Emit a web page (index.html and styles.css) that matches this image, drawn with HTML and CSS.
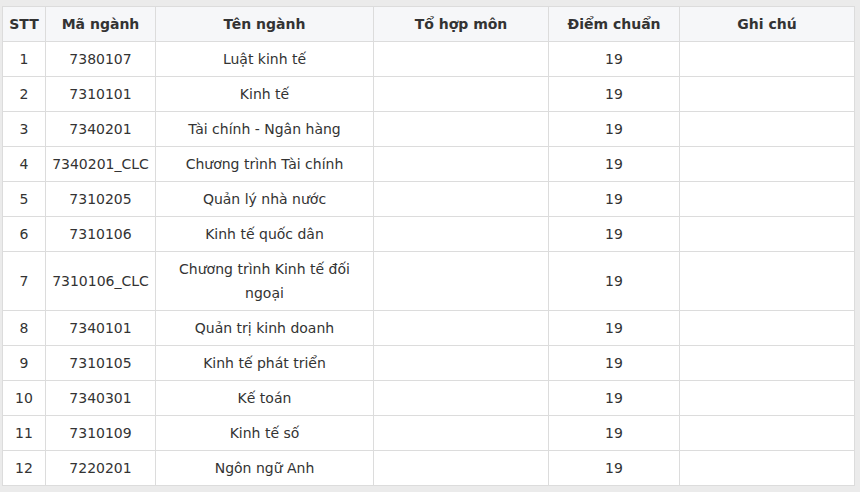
FILE: index.html
```html
<!DOCTYPE html>
<html lang="vi">
<head>
<meta charset="utf-8">
<link rel="stylesheet" href="styles.css">
</head>
<body>
<div class="wrap">
<table class="tbl">
<colgroup>
<col class="c1"><col class="c2"><col class="c3"><col class="c4"><col class="c5"><col class="c6">
</colgroup>
<thead>
<tr><th>STT</th><th>Mã ngành</th><th>Tên ngành</th><th>Tổ hợp môn</th><th>Điểm chuẩn</th><th>Ghi chú</th></tr>
</thead>
<tbody>
<tr><td>1</td><td>7380107</td><td>Luật kinh tế</td><td></td><td>19</td><td></td></tr>
<tr><td>2</td><td>7310101</td><td>Kinh tế</td><td></td><td>19</td><td></td></tr>
<tr><td>3</td><td>7340201</td><td>Tài chính - Ngân hàng</td><td></td><td>19</td><td></td></tr>
<tr><td>4</td><td>7340201_CLC</td><td>Chương trình Tài chính</td><td></td><td>19</td><td></td></tr>
<tr><td>5</td><td>7310205</td><td>Quản lý nhà nước</td><td></td><td>19</td><td></td></tr>
<tr><td>6</td><td>7310106</td><td>Kinh tế quốc dân</td><td></td><td>19</td><td></td></tr>
<tr><td>7</td><td>7310106_CLC</td><td>Chương trình Kinh tế đối ngoại</td><td></td><td>19</td><td></td></tr>
<tr><td>8</td><td>7340101</td><td>Quản trị kinh doanh</td><td></td><td>19</td><td></td></tr>
<tr><td>9</td><td>7310105</td><td>Kinh tế phát triển</td><td></td><td>19</td><td></td></tr>
<tr><td>10</td><td>7340301</td><td>Kế toán</td><td></td><td>19</td><td></td></tr>
<tr><td>11</td><td>7310109</td><td>Kinh tế số</td><td></td><td>19</td><td></td></tr>
<tr><td>12</td><td>7220201</td><td>Ngôn ngữ Anh</td><td></td><td>19</td><td></td></tr>
</tbody>
</table>
</div>
</body>
</html>
```
FILE: styles.css
```css
html, body {
  margin: 0;
  padding: 0;
  background: #ebebeb;
}
body {
  font-family: "DejaVu Sans", Verdana, sans-serif;
  font-size: 14px;
  color: #333;
}
.wrap {
  padding: 6px 6px 0 2px;
}
.tbl {
  width: 852px;
  table-layout: fixed;
  border-collapse: collapse;
  background: #fff;
  border: 1px solid #d8d8d8;
}
.c1 { width: 43px; }
.c2 { width: 110px; }
.c3 { width: 218px; }
.c4 { width: 175px; }
.c5 { width: 131px; }
.c6 { width: 175px; }
.tbl th, .tbl td {
  border: 1px solid #dcdcdc;
  text-align: center;
  vertical-align: middle;
  padding: 5px 6px;
  line-height: 24px;
}
.tbl th {
  background: #f6f7f9;
  font-weight: bold;
  color: #333;
}
```
